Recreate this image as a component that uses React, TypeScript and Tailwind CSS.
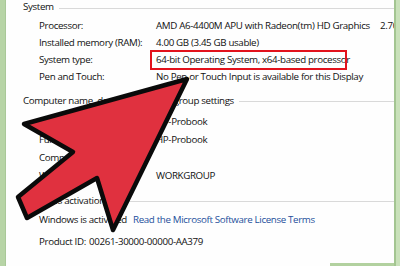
import React from 'react';

const font = { fontFamily: '"Open Sans", "Noto Sans", sans-serif' };

function Header({ title, className = '' }: { title: string; className?: string }) {
  return (
    <div className={`flex items-center h-[15px] ${className}`}>
      <span className="whitespace-nowrap">{title}</span>
      <div className="flex-1 h-px bg-[#d9d9d9] ml-[5px] mt-[1px]" />
    </div>
  );
}

function Row({ label, children, h = 'h-[17px]' }: { label: string; children?: React.ReactNode; h?: string }) {
  return (
    <div className={`flex items-center pl-[16px] ${h}`}>
      <span className="w-[117px] shrink-0 whitespace-nowrap">{label}</span>
      <div className="flex items-center whitespace-nowrap">{children}</div>
    </div>
  );
}

function Arrow() {
  return (
    <svg className="absolute inset-0 pointer-events-none" width="400" height="266" viewBox="0 0 400 266">
      <path
        d="M187 79 L24 124 L73 152 L18 197 L27 218 L97 178 L113 230 Z"
        fill="#e0313f"
        stroke="#0a0a0a"
        strokeWidth="4.5"
        strokeLinejoin="round"
      />
    </svg>
  );
}

export default function App() {
  return (
    <div
      className="relative w-[400px] h-[266px] flex bg-[#c6deb6] overflow-hidden text-[9.75px] tracking-[-0.35px] text-[#111111]"
      style={font}
    >
      {/* left frame */}
      <div className="w-[6px] shrink-0 bg-[#b7d4a6] border-r border-[#a9c898]" />

      {/* window body */}
      <div className="w-[388px] shrink-0 flex flex-col bg-[#fefefe] overflow-hidden pl-[17px]">
        <Header title="System" />
        <div className="mt-[2.5px]">
          <Row label="Processor:">
            <span className="w-[224px] shrink-0">AMD A6-4400M APU with Radeon(tm) HD Graphics</span>
            <span>2.70 GHz</span>
          </Row>
          <Row label="Installed memory (RAM):">4.00 GB (3.45 GB usable)</Row>
          <Row label="System type:">
            <span className="relative">
              64-bit Operating System, x64-based processor
              <span className="absolute -left-[6px] -top-[3px] w-[197px] h-[20px] border-2 border-[#e2121c]" />
            </span>
          </Row>
          <Row label="Pen and Touch:">No Pen or Touch Input is available for this Display</Row>
        </div>

        <Header title="Computer name, domain, and workgroup settings" className="mt-[8px]" />
        <div className="mt-[4.5px]">
          <Row label="Computer name:" h="h-[18px]">HP-Probook</Row>
          <Row label="Full computer name:" h="h-[18px]">HP-Probook</Row>
          <Row label="Computer description:" h="h-[18px]" />
          <Row label="Workgroup:" h="h-[18px]">WORKGROUP</Row>
        </div>

        <Header title="Windows activation" className="mt-[8.5px]" />
        <div className="flex items-center h-[18px] pl-[16px] mt-[2.5px] whitespace-nowrap">
          <span className="w-[94px] shrink-0">Windows is activated</span>
          <span className="text-[#1d4f9c]">Read the Microsoft Software License Terms</span>
        </div>
        <div className="flex items-center h-[18px] pl-[16px] mt-[4px] whitespace-nowrap">
          <span className="w-[50px] shrink-0">Product ID:</span>
          <span>00261-30000-00000-AA379</span>
        </div>
        <div className="flex-1" />
        <div className="flex justify-end">
          <div className="w-[64px] h-[3px] bg-[#b2d19f]" />
        </div>
      </div>

      {/* right frame */}
      <div className="flex-1 border-l-2 border-[#a3c591] bg-[#c9e1ba]" />

      <Arrow />
    </div>
  );
}
